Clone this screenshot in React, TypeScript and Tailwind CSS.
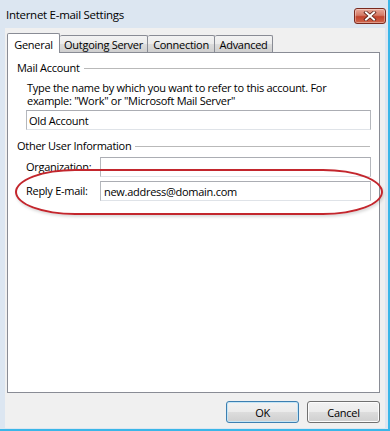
import React from 'react';

function CloseButton() {
  return (
    <div className="mt-[8px] w-[32px] h-[16px] rounded-[3px] border border-[#7a2a1f] bg-[linear-gradient(#e9a99a,#d47a66_45%,#c1432d_55%,#d0674d)] flex items-center justify-center shadow-[inset_0_0_0_1px_rgba(255,255,255,0.35)]">
      <svg width="14" height="10" viewBox="0 0 14 10">
        <path d="M3 1.5 L11 8.5 M11 1.5 L3 8.5" stroke="#5a1f17" strokeWidth="3.6" strokeLinecap="square" />
        <path d="M3 1.5 L11 8.5 M11 1.5 L3 8.5" stroke="#ffffff" strokeWidth="2" strokeLinecap="square" />
      </svg>
    </div>
  );
}

function TextBox({ value, className = '' }: { value: string; className?: string }) {
  return (
    <div
      className={`h-[20px] bg-white border border-[#b5b8bd] border-t-[#abadb3] border-b-[#dfe3e8] flex items-center pl-[2px] leading-none whitespace-nowrap text-black ${className}`}
    >
      {value}
    </div>
  );
}

function GroupLabel({ label }: { label: string }) {
  return (
    <div className="flex items-center gap-[4px] h-[16px]">
      <span className="whitespace-nowrap">{label}</span>
      <div className="flex-1 h-px bg-[#b9b9b9]" />
    </div>
  );
}

function Tab({ label, active, width }: { label: string; active?: boolean; width: string }) {
  if (active) {
    return (
      <div className={`${width} h-[20px] -mb-px relative z-10 bg-white border border-b-0 border-[#898c95] rounded-t-[2px] flex items-start justify-center pt-[3px] whitespace-nowrap`}>
        {label}
      </div>
    );
  }
  return (
    <div
      className={`${width} h-[17px] bg-[linear-gradient(#f3f3f3,#ebebeb_50%,#dddddd_50%,#cfcfcf)] border border-b-0 border-l-0 border-[#898c95] rounded-t-[2px] flex items-start justify-center pt-[1px] whitespace-nowrap`}
    >
      {label}
    </div>
  );
}

function Button({ label, isDefault }: { label: string; isDefault?: boolean }) {
  return (
    <button
      className={`w-[73px] h-[22px] rounded-[3px] border ${
        isDefault ? 'border-[#3c7fb1] shadow-[inset_0_0_0_1px_#c4e5f6]' : 'border-[#707070] shadow-[inset_0_0_0_1px_#fcfcfc]'
      } bg-[linear-gradient(#f2f2f2,#ebebeb_50%,#dddddd_50%,#cfcfcf)] text-[11px] leading-none text-black`}
    >
      {label}
    </button>
  );
}

export default function App() {
  return (
    <div className="relative w-[390px] h-[431px] overflow-hidden bg-[#dce6f1] border-r-2 border-b-2 border-[#3ab6e8] flex flex-col font-['Open_Sans',sans-serif] text-[11px] tracking-[-0.28px] text-black">
      {/* Title bar */}
      <div className="h-[28px] flex items-start justify-between pl-[6px] pr-[2px] shrink-0">
        <span className="mt-[6px] text-[11.5px] whitespace-nowrap">Internet E-mail Settings</span>
        <CloseButton />
      </div>

      {/* Client area */}
      <div className="flex-1 ml-[5px] mr-[3px] mb-px bg-[#f0f0f0] flex flex-col pl-[2px] pr-[5px] pt-[5px]">
        {/* Tabs */}
        <div className="flex items-end h-[19px] relative z-10">
          <Tab label="General" active width="w-[53px]" />
          <Tab label="Outgoing Server" width="w-[88px]" />
          <Tab label="Connection" width="w-[67px]" />
          <Tab label="Advanced" width="w-[58px]" />
        </div>

        {/* Tab panel */}
        <div className="h-[341px] bg-white border border-[#898c95] flex flex-col pl-[9px] pr-[9px] pt-[7px]">
          <GroupLabel label="Mail Account" />
          <div className="pl-[10px] mt-[5px] leading-[13px] whitespace-nowrap">
            Type the name by which you want to refer to this account. For
            <br />
            example: &quot;Work&quot; or &quot;Microsoft Mail Server&quot;
          </div>
          <div className="pl-[9px] mr-[-1px] mt-[3px]">
            <TextBox value="Old Account" />
          </div>

          <div className="mt-[8px]">
            <GroupLabel label="Other User Information" />
          </div>

          <div className="pl-[9px] mr-[-1px] mt-[3px] flex flex-col gap-[4px]">
            <div className="flex items-center">
              <span className="w-[74px] shrink-0 whitespace-nowrap">Organization:</span>
              <TextBox value="" className="flex-1" />
            </div>
            <div className="flex items-center">
              <span className="w-[74px] shrink-0 whitespace-nowrap">Reply E-mail:</span>
              <TextBox value="new.address@domain.com" className="flex-1 pl-[3px]" />
            </div>
          </div>
        </div>

        {/* Buttons */}
        <div className="flex justify-end gap-[8px] mt-[8px]">
          <Button label="OK" isDefault />
          <Button label="Cancel" />
        </div>
      </div>

      {/* Annotation ellipse */}
      <div className="absolute left-[15px] top-[169px] w-[368px] h-[46px] rounded-[60px/23px] border-2 border-[#c3262d] shadow-[1px_2px_3px_rgba(0,0,0,0.15)] pointer-events-none" />
    </div>
  );
}
